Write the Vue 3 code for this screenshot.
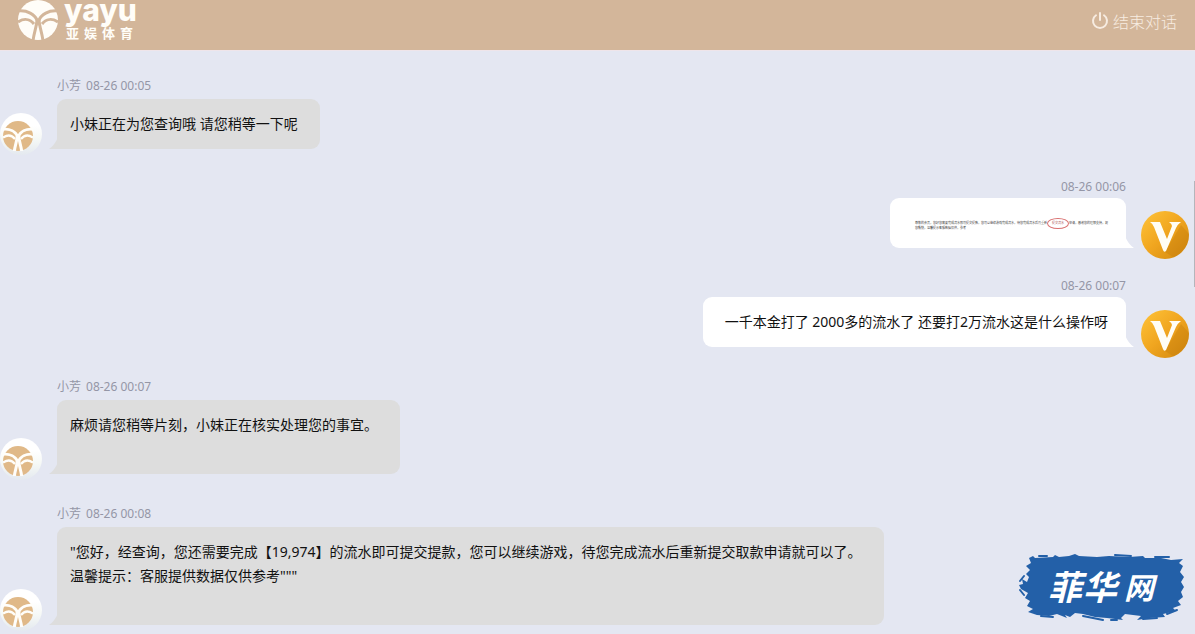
<template>
  <div class="chat">

    <!-- Header -->
    <header class="chat-header">
      <a class="brand" href="#" aria-label="yayu 亚娱体育">
        <svg class="brand-mark" viewBox="0 0 40 40">
          <circle cx="20" cy="20" r="20" fill="#fffdf8" />
          <g fill="none" stroke="#d3b69a">
            <path d="M0 11 C9 10 17 14 20 22 C23 14 31 10 40 11" stroke-width="3" />
            <path d="M19 19 C19 26 16 32 15 41 M21 19 C21 26 24 32 25 41" stroke-width="3" />
            <path d="M0 22 C6 18 12 19 16 24 M40 22 C34 18 28 19 24 24" stroke-width="3" />
          </g>
        </svg>
        <span class="brand-text">
          <span class="brand-latin">yayu</span>
          <span class="brand-cn"><span v-for="c in brandName" :key="c">{{ c }}</span></span>
        </span>
      </a>
      <button class="end-btn" type="button">
        <svg width="18" height="18" viewBox="0 0 18 18" fill="none" stroke="currentColor" stroke-width="2" stroke-linecap="round">
          <path d="M5 3.2a7 7 0 1 0 8 0" />
          <path d="M9 1v7" />
        </svg>
        结束对话
      </button>
    </header>

    <!-- Messages -->
    <main class="messages">
      <article v-for="(m, i) in messages" :key="i" class="msg" :class="m.mine ? 'msg--mine' : 'msg--agent'">
        <div v-if="!m.mine" class="avatar avatar--agent">
          <svg viewBox="0 0 40 40">
            <circle cx="20" cy="20" r="20" fill="#e0b988" />
            <g fill="none" stroke="#fffefa">
              <path d="M0 11 C9 10 17 14 20 22 C23 14 31 10 40 11" stroke-width="4" />
              <path d="M19 19 C19 26 16 32 15 41 M21 19 C21 26 24 32 25 41" stroke-width="4" />
              <path d="M0 22 C6 18 12 19 16 24 M40 22 C34 18 28 19 24 24" stroke-width="3" />
            </g>
          </svg>
        </div>
        <div class="msg-main">
          <div class="msg-meta">
            <span v-if="!m.mine">小芳</span>
            <time>{{ m.time }}</time>
          </div>
          <div class="bubble">
            <div v-if="m.shot" class="shot">
              <p>{{ m.shot[0] }}<span class="shot-mark">{{ m.shot[1] }}</span>{{ m.shot[2] }}</p>
              <p>{{ m.shot[3] }}</p>
            </div>
            <template v-else>
              <p v-for="(line, n) in m.lines" :key="n" class="line">{{ line }}</p>
            </template>
            <svg v-if="m.mine" class="tail" viewBox="0 0 9 12"><path d="M0 0 Q3 8 9 12 H0Z" fill="currentColor" /></svg>
            <svg v-else class="tail" viewBox="0 0 9 12"><path d="M9 0 Q6 8 0 12 H9Z" fill="currentColor" /></svg>
          </div>
        </div>
        <div v-if="m.mine" class="avatar avatar--mine">
          <svg viewBox="0 0 48 48">
            <defs>
              <linearGradient id="gold" x1="0" y1="0" x2="1" y2="1">
                <stop offset="0" stop-color="#ffc43a" />
                <stop offset="0.5" stop-color="#f0a51f" />
                <stop offset="1" stop-color="#cf860e" />
              </linearGradient>
            </defs>
            <circle cx="24" cy="24" r="24" fill="url(#gold)" />
            <path d="M24 41 L40 14 L48 23 A24 24 0 0 1 32 46Z" fill="#c27c0b" opacity="0.35" />
            <path d="M9 11 H19 L26 28 L31 15 Q31 13 28 11 H40 Q37 13 35 17 L25 40 Q23 42 22 39 L13 16 Q12 13 9 11Z" fill="#fffdf5" />
          </svg>
        </div>
      </article>
    </main>

    <div class="scroll-thumb"></div>

    <!-- Site stamp -->
    <svg class="stamp" viewBox="0 0 166 70" role="img" aria-label="菲华网">
      <path
        d="M10 4 L14 2 L16 4 L34 3 L36 1 L40 3 L50 2 L56 0 L60 2 L78 3 L90 2 L110 3 L124 2 L126 4 L142 4 L152 6 L164 5 L160 9 L164 12 L161 18 L165 23 L162 28 L165 33 L162 38 L164 43 L159 47 L162 51 L154 54 L157 57 L144 60 L146 63 L130 64 L118 66 L122 62 L106 60 L102 64 L104 66 L88 64 L76 63 L64 60 L56 59 L51 63 L46 61 L48 64 L38 60 L30 62 L18 61 L9 58 L14 55 L8 52 L11 47 L6 44 L9 39 L2 35 L0 31 L4 30 L3 25 L8 28 L10 23 L7 20 L11 16 L7 12 L12 9 Z"
        fill="#2360a8"
      />
      <path
        d="M20 2 H28 M96 1 L112 2 M136 3 H150 M1 36 L5 41 M5 22 L1 27 M64 62 L84 66 M92 66 H98 M124 65 L138 64 M148 60 L158 56 M22 62 L34 63"
        stroke="#2360a8" stroke-width="2" stroke-linecap="round" fill="none"
      />
      <text class="stamp-text" x="29 64 105" y="46 46 45">菲华<tspan class="stamp-small">网</tspan></text>
    </svg>
  </div>
</template>

<script setup>
const brandName = ['亚', '娱', '体', '育']

const messages = [
  { time: '08-26 00:05', lines: ['小妹正在为您查询哦 请您稍等一下呢'] },
  {
    time: '08-26 00:06',
    mine: true,
    shot: [
      '尊敬的会员，您好您需要完成流水即可提交提款，您可以继续游戏完成流水，待您完成流水后再重新',
      '提交流水',
      '申请，感谢您的理解支持，祝',
      '您愉快，温馨提示客服数据仅供，参考',
    ],
  },
  { time: '08-26 00:07', mine: true, lines: ['一千本金打了 2000多的流水了 还要打2万流水这是什么操作呀'] },
  { time: '08-26 00:07', lines: ['麻烦请您稍等片刻，小妹正在核实处理您的事宜。', ''] },
  {
    time: '08-26 00:08',
    lines: [
      '"您好，经查询，您还需要完成【19,974】的流水即可提交提款，您可以继续游戏，待您完成流水后重新提交取款申请就可以了。',
      '温馨提示：客服提供数据仅供参考"""',
      '',
    ],
  },
]
</script>

<style>
body {
  margin: 0;
  background: #e4e7f2;
}
</style>

<style scoped>
.chat {
  position: relative;
  height: 100vh;
  overflow: hidden;
  display: flex;
  flex-direction: column;
  background: #e4e7f2;
  font-family: 'Noto Sans', 'Noto Sans CJK SC', sans-serif;
}

.chat-header {
  height: 50px;
  flex-shrink: 0;
  box-sizing: border-box;
  display: flex;
  align-items: flex-start;
  justify-content: space-between;
  padding: 0 18px;
  background: #d3b69a;
  box-shadow: 0 1px 0 #efe5ea;
}

.brand {
  display: flex;
  gap: 6px;
  color: #fffdf8;
  text-decoration: none;
}
.brand-mark { width: 40px; height: 40px; }
.brand-text { display: flex; flex-direction: column; }
.brand-latin {
  height: 26px;
  font-family: Inter, sans-serif;
  font-size: 30px;
  font-weight: 800;
  line-height: 20px;
}
.brand-cn {
  display: flex;
  gap: 5px;
  padding-left: 2px;
  font-size: 13px;
  font-weight: 700;
  line-height: 14px;
}

.end-btn {
  display: flex;
  align-items: center;
  gap: 4px;
  height: 41px;
  padding: 0;
  border: none;
  background: none;
  color: #f7ece1;
  font-family: inherit;
  font-size: 16px;
  font-weight: 300;
  cursor: pointer;
}
.end-btn svg { width: 18px; height: 18px; }

.messages {
  flex: 1;
  display: flex;
  flex-direction: column;
  gap: 27px;
  padding-top: 23px;
}

.msg {
  display: flex;
  align-items: flex-end;
  flex-shrink: 0;
  gap: 15px;
}
.msg--mine {
  justify-content: flex-end;
  padding-right: 6px;
}

.msg-meta {
  display: flex;
  gap: 5px;
  font-size: 12px;
  line-height: 26px;
  color: #9496a6;
}
.msg--mine .msg-meta {
  justify-content: flex-end;
  line-height: 22px;
}

.bubble {
  position: relative;
  min-height: 24px;
  padding: 13px 22px 13px 13px;
  border-radius: 9px 9px 9px 0;
  background: #dddddd;
  color: #111;
}
.msg--mine .bubble {
  padding: 13px 18px 13px 22px;
  border-radius: 9px 9px 0 9px;
  background: #fff;
}

.line {
  min-height: 24px;
  margin: 0;
  font-size: 14px;
  line-height: 24px;
}

.tail {
  position: absolute;
  bottom: 0;
  left: -8px;
  width: 9px;
  height: 12px;
  color: #dddddd;
}
.msg--mine .tail {
  left: auto;
  right: -8px;
  color: #fff;
}

.shot {
  padding: 10px 0 4px 3px;
  color: #444;
  font-size: 3px;
  line-height: 5px;
}
.shot p { margin: 0; }
.shot-mark {
  position: relative;
  padding: 0 5px;
  color: #a55;
}
.shot-mark::after {
  content: '';
  position: absolute;
  left: 0;
  right: 0;
  top: -3px;
  height: 9px;
  border: 1px solid #d97070;
  border-radius: 50%;
}

.avatar {
  flex-shrink: 0;
  border-radius: 50%;
}
.avatar svg { display: block; }
.avatar--agent {
  width: 42px;
  height: 42px;
  box-sizing: border-box;
  margin-bottom: -6px;
  padding: 8px 0 0 3px;
  background: linear-gradient(#fff 30%, #f6f9f6 60%, #e4e9ef);
}
.avatar--agent svg { width: 30px; height: 30px; }
.avatar--mine {
  width: 48px;
  height: 48px;
  margin-bottom: -11px;
}

.scroll-thumb {
  position: absolute;
  top: 181px;
  right: 0;
  width: 1px;
  height: 106px;
  background: #b4b5bb;
}

.stamp {
  position: absolute;
  right: 10px;
  bottom: 10px;
  width: 166px;
  height: 70px;
}
.stamp-text {
  fill: #fff;
  font-family: 'Noto Sans CJK SC', sans-serif;
  font-size: 34px;
  font-weight: 700;
  font-style: italic;
}
.stamp-small { font-size: 30px; }
</style>
